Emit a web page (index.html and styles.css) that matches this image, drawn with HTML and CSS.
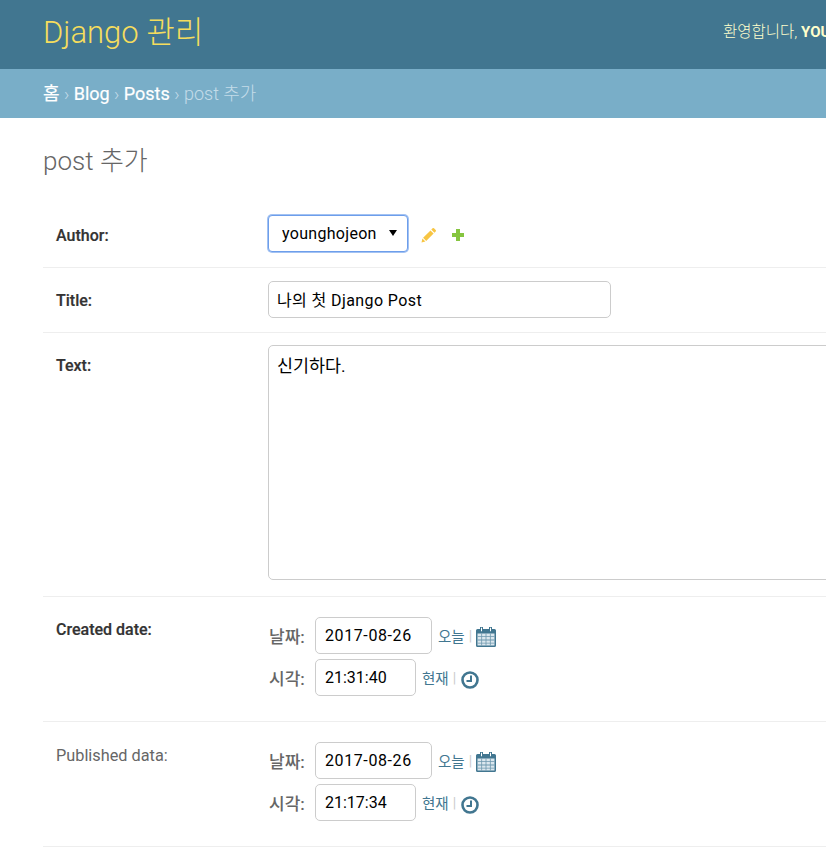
FILE: index.html
```html
<!DOCTYPE html>
<html lang="ko">
<head>
    <meta charset="UTF-8">
    <meta name="viewport" content="width=device-width, initial-scale=1.0">
    <title>post 추가 | Django 관리</title>
    <link rel="stylesheet" href="styles.css">
</head>
<body>
    <svg class="icon-defs" width="0" height="0">
        <symbol id="calendar" viewBox="0 0 20 20">
            <path fill="#417690" d="M4 0h3v2h6V0h3v2h2.500A1.500 1.500 0 0 1 20 3.500v15a1.500 1.500 0 0 1-1.500 1.500h-17A1.500 1.500 0 0 1 0 18.500v-15A1.500 1.500 0 0 1 1.500 2H4z"/>
            <path fill="#dbe7ee" d="M1.500 6.500h17v12h-17z"/>
            <path fill="#6d97ad" d="M1.500 9.300h17v.8h-17zM1.500 12.600h17v.8h-17zM1.500 15.800h17v.8h-17zM5.300 6.500h.8v12h-.8zM9.600 6.500h.8v12h-.8zM13.900 6.500h.8v12h-.8z"/>
            <path fill="#fff" d="M5 .8h1v3.400H5zM14 .8h1v3.400h-1z"/>
        </symbol>
        <symbol id="clock" viewBox="0 0 18 18">
            <circle cx="9" cy="9" r="7.500" fill="#fff" stroke="#417690" stroke-width="2.600"/>
            <path fill="none" stroke="#417690" stroke-width="2" d="M10 4.500V10H5.500"/>
        </symbol>
    </svg>

    <div class="page">
        <header class="header">
            <div class="branding">Django 관리</div>
            <div class="user-tools">환영합니다, <strong>YOUNGHOJEON</strong>.</div>
        </header>

        <nav class="breadcrumbs">
            <a href="#">홈</a> › <a href="#">Blog</a> › <a href="#">Posts</a> › post 추가
        </nav>

        <main class="content">
            <h1 class="page-title">post 추가</h1>
            <form class="post-form">
                <div class="form-row row-author">
                    <label class="required" for="author">Author:</label>
                    <div class="related">
                        <div class="select-wrap">
                            <select class="select-focus" id="author">
                                <option>younghojeon</option>
                            </select>
                        </div>
                        <a class="rel-link" href="#">
                            <svg width="16" height="16" viewBox="0 0 16 16"><path fill="#f7c543" d="M11.600 1.300a1 1 0 0 1 1.400 0l1.700 1.700a1 1 0 0 1 0 1.400l-1.300 1.300-3.100-3.100zM9.500 3.400l3.100 3.100-7.400 7.400-3.100-3.100zM1.400 11.600l3 3-3.900.9z"/></svg>
                        </a>
                        <a class="rel-link" href="#">
                            <svg width="14" height="14" viewBox="0 0 14 14"><path fill="#86c540" d="M5 1h4v4h4v4H9v4H5V9H1V5h4z"/></svg>
                        </a>
                    </div>
                </div>

                <div class="form-row row-title">
                    <label class="required" for="title">Title:</label>
                    <input class="text-input" id="title" type="text" value="나의 첫 Django Post">
                </div>

                <div class="form-row row-text">
                    <label class="required" for="body">Text:</label>
                    <textarea class="text-area" id="body">신기하다.</textarea>
                </div>

                <div class="form-row row-date">
                    <label class="required">Created date:</label>
                    <div class="datetime">
                        <p class="datetime-line">
                            <span class="dt-label">날짜:</span>
                            <input class="date-input" type="text" value="2017-08-26">
                            <span class="shortcuts today"><a href="#">오늘</a> <span class="sep">|</span> <svg class="cal-icon" width="20" height="20"><use href="#calendar"/></svg></span>
                        </p>
                        <p class="datetime-line">
                            <span class="dt-label">시각:</span>
                            <input class="time-input" type="text" value="21:31:40">
                            <span class="shortcuts"><a href="#">현재</a> <span class="sep">|</span> <svg class="clock-icon" width="18" height="18"><use href="#clock"/></svg></span>
                        </p>
                    </div>
                </div>

                <div class="form-row row-date">
                    <label>Published data:</label>
                    <div class="datetime">
                        <p class="datetime-line">
                            <span class="dt-label">날짜:</span>
                            <input class="date-input" type="text" value="2017-08-26">
                            <span class="shortcuts today"><a href="#">오늘</a> <span class="sep">|</span> <svg class="cal-icon" width="20" height="20"><use href="#calendar"/></svg></span>
                        </p>
                        <p class="datetime-line">
                            <span class="dt-label">시각:</span>
                            <input class="time-input" type="text" value="21:17:34">
                            <span class="shortcuts"><a href="#">현재</a> <span class="sep">|</span> <svg class="clock-icon" width="18" height="18"><use href="#clock"/></svg></span>
                        </p>
                    </div>
                </div>
            </form>
        </main>
    </div>
</body>
</html>
```

FILE: styles.css
```css
html, body {
    margin: 0;
    height: 100%;
    overflow: hidden;
}
body {
    font-family: Roboto, "Noto Sans CJK KR", sans-serif;
    color: #333;
    background: #fff;
}
a {
    text-decoration: none;
}
.icon-defs {
    position: absolute;
}
.page {
    width: 1200px;
}
.header {
    display: flex;
    height: 69px;
    padding: 15px 43px 0;
    background: #417690;
    color: #ffc;
    box-sizing: border-box;
}
.branding {
    width: 680px;
    font-size: 31px;
    line-height: 36px;
    font-weight: 300;
    color: #f5dd5d;
}
.user-tools {
    padding-top: 8px;
    font-size: 15.500px;
    line-height: 18px;
    font-weight: 300;
}
.user-tools strong {
    font-size: 15px;
    font-weight: 700;
}
.breadcrumbs {
    height: 49px;
    line-height: 49px;
    padding: 0 43px;
    box-sizing: border-box;
    background: #79aec8;
    color: #c4dce8;
    font-size: 18px;
    font-weight: 300;
}
.breadcrumbs a {
    color: #fff;
    font-weight: 400;
    -webkit-text-stroke: 0.2px #fff;
}
.content {
    padding: 0 43px;
}
.page-title {
    margin: 0;
    padding: 27px 0 0;
    height: 84px;
    box-sizing: border-box;
    font-size: 26px;
    line-height: 32px;
    font-weight: 300;
    color: #666;
}
.post-form {
    display: flex;
    flex-direction: column;
}
.form-row {
    display: flex;
    box-sizing: border-box;
    padding-left: 13px;
    border-bottom: 1px solid #eee;
    font-size: 16px;
}
.form-row label {
    width: 212px;
    flex-shrink: 0;
    font-size: 16.300px;
    line-height: 19px;
    color: #666;
}
.form-row label.required {
    font-weight: 500;
    font-size: 16px;
    color: #333;
    -webkit-text-stroke: 0.2px #333;
}
.row-author {
    height: 66px;
    padding-top: 13px;
}
.row-author label {
    padding-top: 11px;
}
.row-title {
    height: 65px;
    padding-top: 13px;
}
.row-title label {
    padding-top: 10px;
}
.row-text {
    height: 264px;
    padding-top: 12px;
}
.row-text label {
    padding-top: 11px;
}
.row-date {
    height: 125px;
    padding-top: 20px;
}
.row-date label {
    padding-top: 4px;
}
.row-date label.required {
    padding-top: 3px;
}
.related {
    display: flex;
    align-items: center;
    height: 37px;
}
.select-wrap {
    position: relative;
    margin-right: 13px;
}
.select-wrap::after {
    content: "";
    position: absolute;
    top: 15px;
    right: 11px;
    border-style: solid;
    border-width: 6px 4px 0;
    border-color: #000 transparent transparent;
}
.select-focus {
    display: block;
    width: 140px;
    height: 37px;
    padding: 0 13px;
    font: 16px Roboto, sans-serif;
    letter-spacing: .3px;
    color: #000;
    background: #fff;
    border: 1px solid #6d9eeb;
    border-radius: 4px;
    box-shadow: 0 0 0 1px #a3c2f2;
    outline: none;
    appearance: none;
}
.rel-link {
    display: flex;
    margin-top: 2px;
    margin-right: 14px;
}
.text-input,
.text-area,
.date-input,
.time-input {
    box-sizing: border-box;
    margin: 0;
    font: 16px Roboto, "Noto Sans CJK KR", sans-serif;
    color: #000;
    border: 1px solid #ccc;
    border-radius: 5px;
    background: #fff;
    padding: 0 9px;
}
.text-input {
    width: 343px;
    height: 37px;
    padding: 0 8px 2px;
    letter-spacing: .4px;
}
.text-area {
    width: 800px;
    height: 235px;
    padding: 6px 8px;
    resize: none;
    font-size: 17.400px;
}
.datetime {
    display: flex;
    flex-direction: column;
    gap: 5px;
}
.datetime-line {
    display: flex;
    align-items: center;
    margin: 0;
    height: 37px;
}
.dt-label {
    width: 46px;
    margin-left: 1px;
    font-size: 17px;
    font-weight: 500;
    color: #666;
}
.date-input {
    width: 117px;
    height: 37px;
    letter-spacing: .6px;
}
.time-input {
    width: 101px;
    height: 37px;
}
.shortcuts {
    display: flex;
    align-items: center;
    gap: 4px;
    margin-left: 6px;
    font-size: 14px;
    color: #417690;
}
.shortcuts a {
    color: #417690;
    font-size: 14.500px;
}
.sep {
    color: #ccc;
}
.cal-icon {
    margin-top: 2px;
}
.clock-icon {
    margin-left: 1px;
    margin-top: 5px;
}
```
